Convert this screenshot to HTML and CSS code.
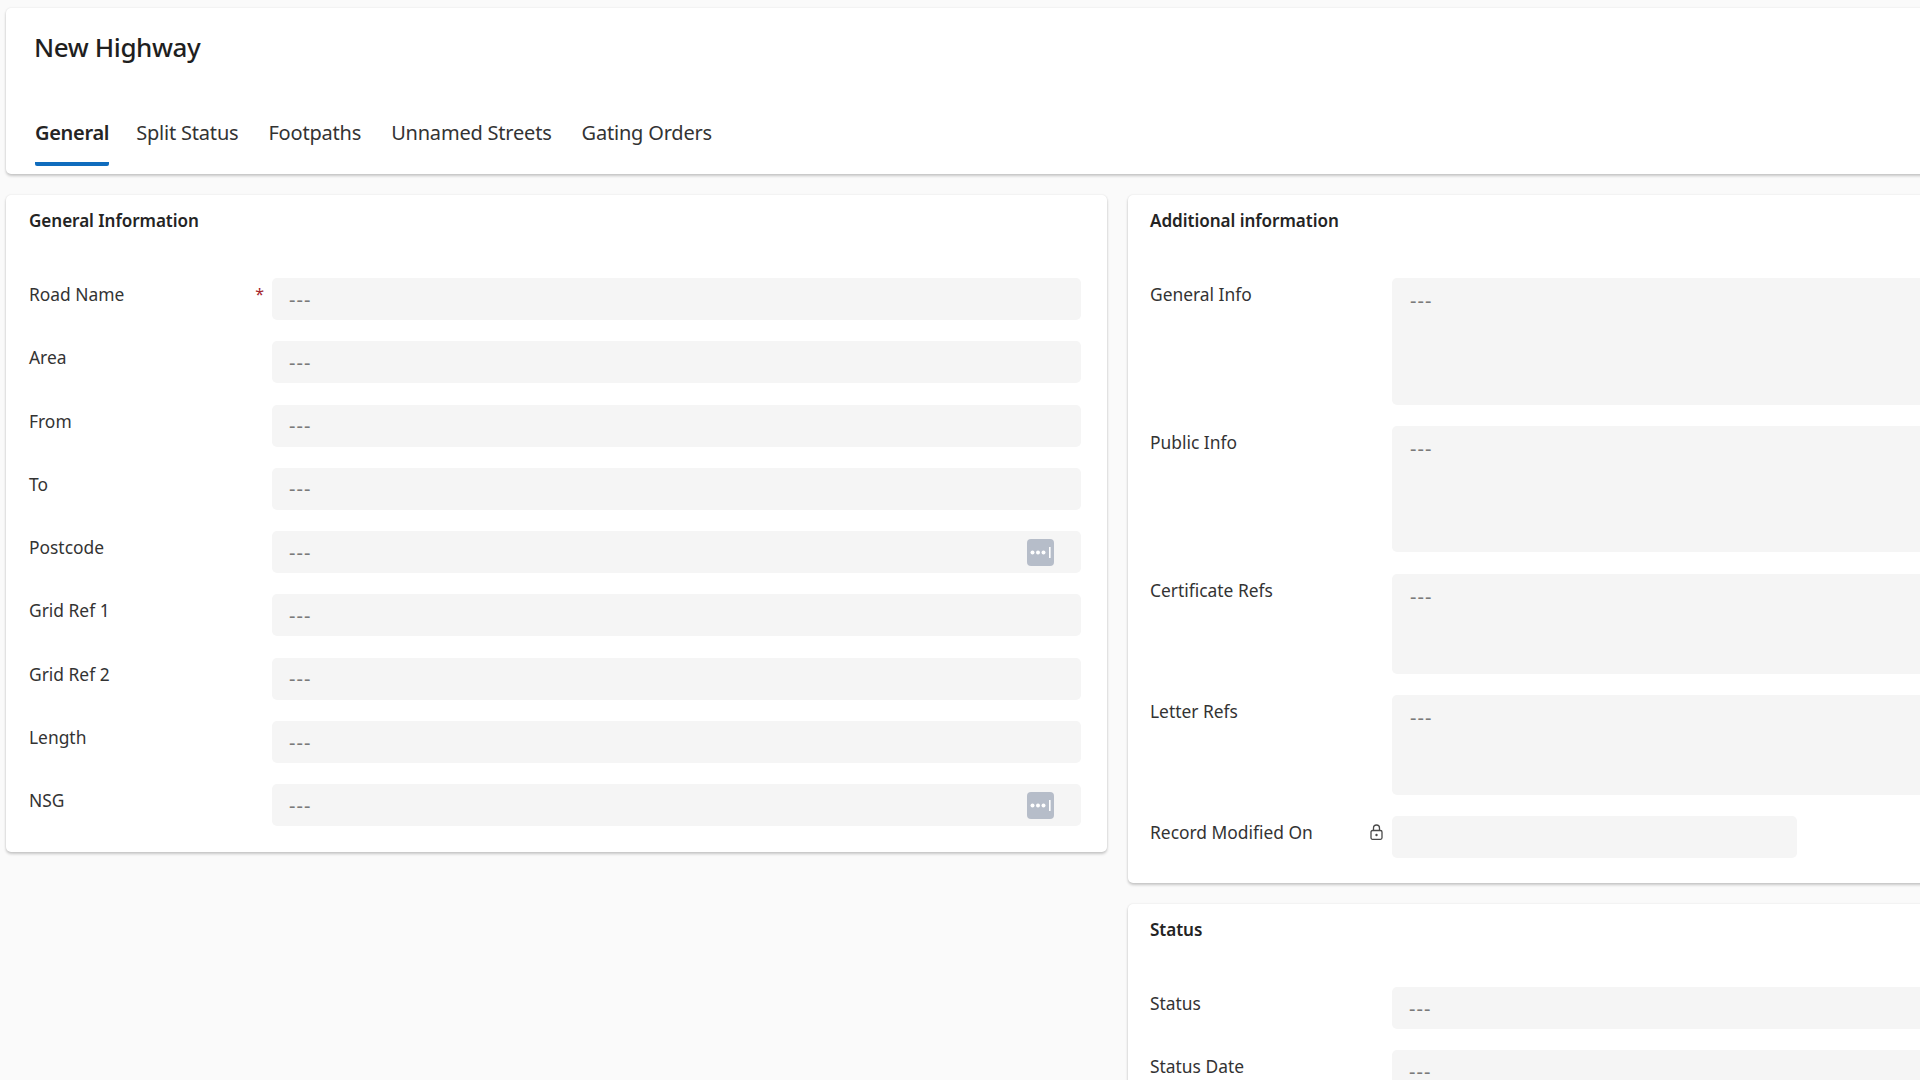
FILE: index.html
```html
<!DOCTYPE html>
<html lang="en">
<head>
<meta charset="utf-8">
<title>New Highway</title>
<link rel="stylesheet" href="styles.css">
</head>
<body>
<div class="page">
  <header class="card head">
    <h1 class="title">New Highway</h1>
    <nav class="tabs">
      <span class="tab active">General</span>
      <span class="tab">Split Status</span>
      <span class="tab">Footpaths</span>
      <span class="tab">Unnamed Streets</span>
      <span class="tab">Gating Orders</span>
    </nav>
  </header>
  <main class="cols">
    <section class="card sec sec-left">
      <h2 class="sec-title">General Information</h2>
      <div class="rows">
        <div class="row"><div class="lab">Road Name<span class="req">*</span></div><div class="inp">---</div></div>
        <div class="row"><div class="lab">Area</div><div class="inp">---</div></div>
        <div class="row"><div class="lab">From</div><div class="inp">---</div></div>
        <div class="row"><div class="lab">To</div><div class="inp">---</div></div>
        <div class="row"><div class="lab">Postcode</div><div class="inp">---<svg class="more" viewBox="0 0 27 27"><rect width="27" height="27" rx="4" fill="#b6bdc9"/><circle cx="5.5" cy="13.5" r="2" fill="#fff"/><circle cx="11" cy="13.5" r="2" fill="#fff"/><circle cx="16.500" cy="13.5" r="2" fill="#fff"/><rect x="22" y="8" width="1.600" height="11" fill="#fff"/></svg></div></div>
        <div class="row"><div class="lab">Grid Ref 1</div><div class="inp">---</div></div>
        <div class="row"><div class="lab">Grid Ref 2</div><div class="inp">---</div></div>
        <div class="row"><div class="lab">Length</div><div class="inp">---</div></div>
        <div class="row"><div class="lab">NSG</div><div class="inp">---<svg class="more" viewBox="0 0 27 27"><rect width="27" height="27" rx="4" fill="#b6bdc9"/><circle cx="5.5" cy="13.5" r="2" fill="#fff"/><circle cx="11" cy="13.5" r="2" fill="#fff"/><circle cx="16.500" cy="13.5" r="2" fill="#fff"/><rect x="22" y="8" width="1.600" height="11" fill="#fff"/></svg></div></div>
      </div>
    </section>
    <div class="stack">
      <section class="card sec sec-right">
        <h2 class="sec-title">Additional information</h2>
        <div class="rows">
          <div class="row"><div class="lab">General Info</div><div class="inp area h127">---</div></div>
          <div class="row"><div class="lab">Public Info</div><div class="inp area h126">---</div></div>
          <div class="row"><div class="lab">Certificate Refs</div><div class="inp area h100">---</div></div>
          <div class="row"><div class="lab">Letter Refs</div><div class="inp area h100">---</div></div>
          <div class="row"><div class="lab">Record Modified On<svg class="lock" viewBox="0 0 13 16"><path d="M3.500 6.500V4a3 3 0 0 1 6 0v2.500" fill="none" stroke="#4a4a4a" stroke-width="1.300"/><rect x="1" y="6.500" width="11" height="8.800" rx="1.500" fill="none" stroke="#4a4a4a" stroke-width="1.300"/><circle cx="6.500" cy="11" r="1.200" fill="#4a4a4a"/></svg></div><div class="inp short"></div></div>
        </div>
      </section>
      <section class="card sec sec-right">
        <h2 class="sec-title">Status</h2>
        <div class="rows">
          <div class="row"><div class="lab">Status</div><div class="inp">---</div></div>
          <div class="row"><div class="lab">Status Date</div><div class="inp">---</div></div>
        </div>
      </section>
    </div>
  </main>
</div>
</body>
</html>
```
FILE: styles.css
```css
html, body {
  margin: 0;
  height: 1080px;
  overflow: hidden;
  background: #fafafa;
}
body {
  font-family: "Noto Sans", "Open Sans", sans-serif;
  color: #242424;
}
.page {
  width: 2400px;
  box-sizing: border-box;
  padding: 8px 0 0 6px;
}
.card {
  background: #fff;
  border-radius: 5px;
  box-shadow: 0 2px 3px rgba(0, 0, 0, .2), 0 0 2px rgba(0, 0, 0, .1);
}
.head {
  height: 166px;
  box-sizing: border-box;
  padding: 23px 0 0 29px;
}
.title {
  margin: 0 0 0 -1px;
  font-size: 26px;
  font-weight: 500;
  line-height: 32px;
  letter-spacing: -.4px;
  color: #1f1f1f;
}
.tabs {
  display: flex;
  margin-top: 58px;
}
.tab {
  font-size: 20px;
  line-height: 24px;
  letter-spacing: -.2px;
  padding-bottom: 17px;
  margin-right: 30px;
  color: #333;
  white-space: nowrap;
}
.tab.active {
  font-weight: 600;
  letter-spacing: -.3px;
  color: #242424;
  border-bottom: 4px solid #0f6cbd;
  border-radius: 0 0 2px 2px;
  margin-right: 27px;
}
.cols {
  display: grid;
  grid-template-columns: 1101px 1fr;
  column-gap: 21px;
  align-items: start;
  margin-top: 21px;
}
.stack {
  display: flex;
  flex-direction: column;
  gap: 21px;
}
.sec {
  box-sizing: border-box;
}
.sec-left {
  padding: 14px 26px 26px 23px;
}
.sec-right {
  padding: 14px 0 25px 22px;
}
.sec-title {
  margin: 0 0 45px;
  font-size: 17.100px;
  line-height: 24px;
  font-weight: 600;
  letter-spacing: -.05px;
  color: #242424;
}
.rows {
  display: flex;
  flex-direction: column;
  gap: 21.300px;
}
.row {
  display: grid;
  grid-template-columns: 242px 1fr;
}
.sec-left .row {
  grid-template-columns: 243px 1fr;
}
.lab {
  display: flex;
  justify-content: space-between;
  align-items: flex-start;
  font-size: 17.400px;
  line-height: 24px;
  color: #333;
  padding: 4px 8px 0 0;
}
.req {
  color: #a4262c;
  font-size: 16px;
  line-height: 18px;
  margin: 3px 0 0 0;
}
.lock {
  width: 13px;
  height: 16px;
  margin-top: 4px;
  margin-right: 1px;
}
.inp {
  display: flex;
  justify-content: space-between;
  align-items: center;
  box-sizing: border-box;
  height: 42px;
  padding: 1px 0 0 17px;
  background: #f5f5f5;
  border-radius: 5px;
  color: #7a7a7a;
  font-size: 20px;
  letter-spacing: 1px;
  line-height: 20px;
}
.more {
  width: 27px;
  height: 27px;
  margin: -1px 27px 0 0;
}
.area {
  align-items: flex-start;
  padding: 13px 0 0 18px;
}
.h127 {
  height: 127px;
}
.h126 {
  height: 126px;
}
.h100 {
  height: 100px;
}
.short {
  width: 405px;
}
```
